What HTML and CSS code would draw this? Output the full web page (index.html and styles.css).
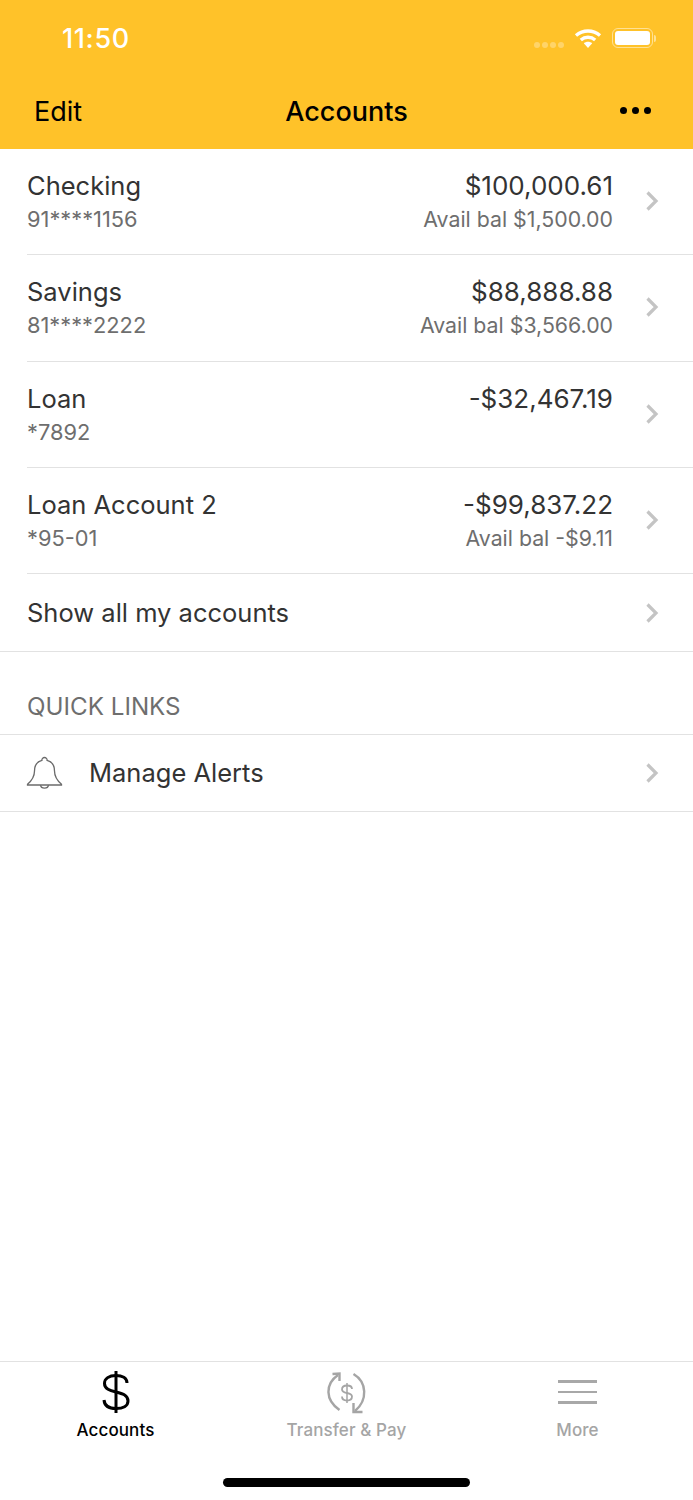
FILE: index.html
```html
<!DOCTYPE html>
<html lang="en">
<head>
  <meta charset="UTF-8" />
  <meta name="viewport" content="width=device-width, initial-scale=1" />
  <title>Accounts</title>
  <link rel="stylesheet" href="styles.css">
</head>
<body>
  <header class="top">
    <div class="status">
      <span class="clock">11:50</span>
      <div class="status-icons">
        <div class="signal"><i></i><i></i><i></i><i></i></div>
        <svg class="wifi" width="28" height="21" viewBox="0 0 28 21">
          <path d="M2 7.5C9 1.5 19 1.5 26 7.5" fill="none" stroke="#fff" stroke-width="3.4"/>
          <path d="M6.8 12C11 8.4 17 8.4 21.2 12" fill="none" stroke="#fff" stroke-width="3.4"/>
          <path d="M9.8 15.2C12.3 13.2 15.7 13.2 18.2 15.2L14 20Z" fill="#fff"/>
        </svg>
        <div class="battery"><div class="battery-fill"></div></div>
        <div class="battery-cap"></div>
      </div>
    </div>
    <nav class="navbar">
      <span class="nav-edit">Edit</span>
      <span class="nav-title">Accounts</span>
      <div class="nav-more"><i></i><i></i><i></i></div>
    </nav>
  </header>

  <main class="content">
    <section class="accounts">
      <a class="row">
        <div class="row-left">
          <div class="name">Checking</div>
          <div class="sub">91****1156</div>
        </div>
        <div class="row-right">
          <div class="amount">$100,000.61</div>
          <div class="sub">Avail bal $1,500.00</div>
        </div>
        <svg class="chevron" width="14" height="22" viewBox="0 0 14 22"><path d="M2.5 2.5L11 11L2.5 19.5"/></svg>
      </a>
      <a class="row">
        <div class="row-left">
          <div class="name">Savings</div>
          <div class="sub">81****2222</div>
        </div>
        <div class="row-right">
          <div class="amount">$88,888.88</div>
          <div class="sub">Avail bal $3,566.00</div>
        </div>
        <svg class="chevron" width="14" height="22" viewBox="0 0 14 22"><path d="M2.5 2.5L11 11L2.5 19.5"/></svg>
      </a>
      <a class="row">
        <div class="row-left">
          <div class="name">Loan</div>
          <div class="sub">*7892</div>
        </div>
        <div class="row-right">
          <div class="amount">-$32,467.19</div>
          <div class="sub">&nbsp;</div>
        </div>
        <svg class="chevron" width="14" height="22" viewBox="0 0 14 22"><path d="M2.5 2.5L11 11L2.5 19.5"/></svg>
      </a>
      <a class="row">
        <div class="row-left">
          <div class="name">Loan Account 2</div>
          <div class="sub">*95-01</div>
        </div>
        <div class="row-right">
          <div class="amount">-$99,837.22</div>
          <div class="sub">Avail bal -$9.11</div>
        </div>
        <svg class="chevron" width="14" height="22" viewBox="0 0 14 22"><path d="M2.5 2.5L11 11L2.5 19.5"/></svg>
      </a>
      <a class="row-single">
        <span class="name">Show all my accounts</span>
        <svg class="chevron" width="14" height="22" viewBox="0 0 14 22"><path d="M2.5 2.5L11 11L2.5 19.5"/></svg>
      </a>
    </section>

    <h2 class="section-title">QUICK LINKS</h2>
    <a class="link-row">
      <svg class="bell" width="37" height="34" viewBox="0 0 37 34">
        <path d="M18.5 1.5a2.6 2.6 0 0 1 2.6 2.9C25.8 5.6 28.5 9.6 28.5 15C28.5 20.5 30.5 24 35.5 28.3V29H1.5V28.3C6.5 24 8.5 20.5 8.5 15C8.5 9.6 11.2 5.6 15.9 4.4A2.6 2.6 0 0 1 18.5 1.5Z"/>
        <path d="M14.5 29.2C15 33.2 22 33.2 22.5 29.2"/>
      </svg>
      <span class="name">Manage Alerts</span>
      <svg class="chevron" width="14" height="22" viewBox="0 0 14 22"><path d="M2.5 2.5L11 11L2.5 19.5"/></svg>
    </a>
  </main>

  <footer class="tabbar">
    <div class="tabs">
      <div class="tab tab-active">
        <svg width="30" height="44" viewBox="0 0 30 44" fill="none" stroke="#000" stroke-width="3">
          <path d="M15 1V43"/>
          <path d="M26 13C26 8 21 5.500 15 5.500C8 5.500 3.500 8.500 3.500 13.500C3.500 19 9 20.500 15 22C21 23.500 27 25 27 31C27 36 22 38.500 15 38.500C8 38.500 3.500 35.500 3 30"/>
        </svg>
        <span>Accounts</span>
      </div>
      <div class="tab">
        <svg width="42" height="44" viewBox="0 0 42 44" fill="none" stroke="#a5a5a5" stroke-width="2.400">
          <path d="M13.500 40C-1 30 -1 14 12 5"/>
          <path d="M6.500 4L13.500 3.500V11"/>
          <path d="M27.500 4C41 12 42 30 29 41"/>
          <path d="M27.500 33V42H36.500"/>
          <path d="M21 13V33" stroke-width="1.500"/>
          <path d="M26 19C26 16.500 24 15.500 21 15.500C18 15.500 16 17 16 19.500C16 24.500 26 21.500 26 26.500C26 29 24 30.500 21 30.500C18 30.500 16 29 16 26.500" stroke-width="1.800"/>
        </svg>
        <span>Transfer &amp; Pay</span>
      </div>
      <div class="tab">
        <div class="tab-lines"><i></i><i></i><i></i></div>
        <span>More</span>
      </div>
    </div>
    <div class="home-bar"></div>
  </footer>
</body>
</html>
```

FILE: styles.css
```css
* {
  box-sizing: border-box;
}
body {
  margin: 0;
  width: 693px;
  height: 1500px;
  display: flex;
  flex-direction: column;
  font-family: Inter, "Liberation Sans", sans-serif;
  background: #fff;
  color: #333;
  overflow: hidden;
}
.top {
  height: 149px;
  background: #ffc229;
  flex-shrink: 0;
}
.status {
  height: 76px;
  padding: 0 37px 0 62px;
  display: flex;
  align-items: center;
  justify-content: space-between;
}
.clock {
  color: #fff;
  font-size: 27px;
  font-weight: 500;
  letter-spacing: 0.6px;
}
.status-icons {
  display: flex;
  align-items: center;
}
.signal {
  display: flex;
  gap: 2px;
  margin-right: 10px;
  margin-top: 13px;
}
.signal i {
  width: 6px;
  height: 6px;
  border-radius: 50%;
  background: rgba(255, 255, 255, 0.3);
}
.wifi {
  margin-right: 10px;
}
.battery {
  width: 41px;
  height: 20px;
  border: 1.500px solid rgba(255, 255, 255, 0.5);
  border-radius: 6px;
  padding: 2px;
}
.battery-fill {
  height: 100%;
  background: #fff;
  border-radius: 3px;
}
.battery-cap {
  width: 2px;
  height: 7px;
  margin-left: 1px;
  background: rgba(255, 255, 255, 0.5);
  border-radius: 0 2px 2px 0;
}
.navbar {
  height: 73px;
  padding: 0 42px 3px 34px;
  display: flex;
  align-items: center;
  justify-content: space-between;
  position: relative;
  color: #000;
  font-size: 27px;
}
.nav-title {
  position: absolute;
  left: 0;
  right: 0;
  text-align: center;
  font-weight: 500;
}
.nav-more {
  display: flex;
  gap: 5px;
  margin-bottom: 1px;
}
.nav-more i {
  width: 7px;
  height: 7px;
  border-radius: 50%;
  background: #000;
}
.content {
  flex: 1;
}
.accounts {
  border-bottom: 1px solid #e2e2e2;
}
.row {
  height: 106.300px;
  margin-left: 27px;
  padding: 21px 0 0 0;
  display: flex;
  align-items: flex-start;
  border-bottom: 1px solid #e2e2e2;
}
.row-left {
  flex: 1;
}
.row-right {
  text-align: right;
}
.name {
  font-size: 25.500px;
  line-height: 32px;
  color: #333;
}
.amount {
  font-size: 26px;
  line-height: 32px;
  color: #333;
}
.sub {
  line-height: 34px;
  color: #6e6e6e;
}
.row-left .sub {
  font-size: 21.800px;
}
.row-right .sub {
  font-size: 21.300px;
}
.chevron {
  flex-shrink: 0;
  margin: 20px 34px 0 32px;
}
.chevron path {
  fill: none;
  stroke: #c4c4c4;
  stroke-width: 3.200;
}
.row-single {
  height: 77px;
  margin-left: 27px;
  display: flex;
  align-items: center;
  justify-content: space-between;
}
.row-single .chevron,
.link-row .chevron {
  margin-top: 0;
}
.section-title {
  margin: 0;
  padding: 0 27px;
  height: 82.800px;
  display: flex;
  align-items: flex-end;
  padding-bottom: 12px;
  font-size: 24.200px;
  line-height: 30px;
  font-weight: 400;
  color: #6e6e6e;
  border-bottom: 1px solid #e2e2e2;
}
.link-row {
  height: 77px;
  padding-left: 26px;
  display: flex;
  align-items: center;
  border-bottom: 1px solid #e2e2e2;
}
.bell {
  margin-right: 26px;
}
.bell path {
  fill: none;
  stroke: #6b6b6b;
  stroke-width: 1.300;
}
.link-row .name {
  flex: 1;
}
.tabbar {
  height: 139px;
  flex-shrink: 0;
  border-top: 1px solid #e2e2e2;
}
.tabs {
  display: grid;
  grid-template-columns: repeat(3, 1fr);
  height: 116px;
  padding-top: 8px;
}
.tab {
  display: flex;
  flex-direction: column;
  align-items: center;
  gap: 5px;
  font-size: 17px;
  font-weight: 500;
  line-height: 22px;
  letter-spacing: 0.1px;
  color: #a5a5a5;
}
.tab svg,
.tab-lines {
  height: 44px;
}
.tab-active {
  color: #000;
}
.tab-lines {
  width: 39px;
  display: flex;
  flex-direction: column;
  justify-content: center;
  gap: 8px;
}
.tab-lines i {
  height: 2.500px;
  background: #a8a8a8;
}
.home-bar {
  width: 247px;
  height: 9px;
  margin: 0 auto;
  border-radius: 5px;
  background: #000;
}
```
